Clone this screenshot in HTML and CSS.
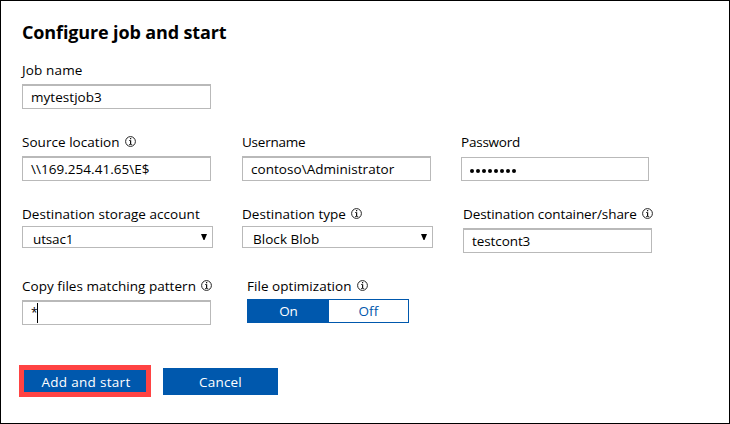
FILE: index.html
```
<!DOCTYPE html>
<html lang="en">
<head>
<meta charset="utf-8">
<title>Configure job and start</title>
<link rel="stylesheet" href="styles.css">
</head>
<body>
<svg class="defs" aria-hidden="true">
  <symbol id="info" viewBox="0 0 11 11"><circle cx="5.5" cy="5.5" r="4.9" fill="none" stroke="#222" stroke-width="1"/><path d="M5 2h1.200v1.200H5zM4 4.200h2.200v3.800h1v.8H4V8h1V5H4z" fill="#111"/></symbol>
</svg>
<main class="panel">
  <h1><span class="t-title">Configure job and start</span></h1>
  <div class="row row-name">
    <div class="field"><div class="label"><span class="t-job">Job name</span></div><div class="input thick"><span class="t-myjob">mytestjob3</span></div></div>
  </div>
  <div class="row row-source">
    <div class="field"><div class="label"><span class="t-source">Source location</span><svg class="info"><use href="#info"/></svg></div><div class="input thick"><span class="t-path">\\169.254.41.65\E$</span></div></div>
    <div class="field"><div class="label"><span class="t-user">Username</span></div><div class="input thick"><span class="t-admin">contoso\Administrator</span></div></div>
    <div class="field"><div class="label"><span class="t-pass">Password</span></div><div class="input password"><i></i><i></i><i></i><i></i><i></i><i></i><i></i><i></i></div></div>
  </div>
  <div class="row row-dest">
    <div class="field"><div class="label"><span class="t-storage">Destination storage account</span></div><div class="select"><span class="t-utsac">utsac1</span><svg class="arrow" viewBox="0 0 6 6"><path d="M0 0h6L3.500 6h-1z"/></svg></div></div>
    <div class="field"><div class="label"><span class="t-type">Destination type</span><svg class="info"><use href="#info"/></svg></div><div class="select"><span class="t-blob">Block Blob</span><svg class="arrow" viewBox="0 0 6 6"><path d="M0 0h6L3.500 6h-1z"/></svg></div></div>
    <div class="field"><div class="label"><span class="t-share">Destination container/share</span><svg class="info"><use href="#info"/></svg></div><div class="input thick lower"><span class="t-cont">testcont3</span></div></div>
  </div>
  <div class="row row-options">
    <div class="field"><div class="label"><span class="t-copy">Copy files matching pattern</span><svg class="info"><use href="#info"/></svg></div><div class="input thick pattern"><span class="t-star">*</span><b class="caret"></b></div></div>
    <div class="field"><div class="label"><span class="t-opt">File optimization</span><svg class="info"><use href="#info"/></svg></div><div class="toggle"><div class="on"><span class="t-on">On</span></div><div class="off"><span class="t-off">Off</span></div></div></div>
  </div>
  <div class="actions">
    <div class="button primary"><span class="t-add">Add and start</span></div>
    <div class="button"><span class="t-cancel">Cancel</span></div>
  </div>
</main>
</body>
</html>
```
FILE: styles.css
```
* { box-sizing: border-box; }
body { margin: 0; background: #fff; color: #000; font: 13.5px/18px "Open Sans", "Noto Sans", sans-serif; letter-spacing: 0.04px; }
.defs { display: block; width: 0; height: 0; }
.panel { width: 730px; height: 424px; border: 1px solid #000; padding: 19px 0 0 21px; }
h1 { margin: 0; height: 41px; font-size: 18px; line-height: 24px; font-weight: 700; letter-spacing: -0.13px; }
span { white-space: nowrap; }
.t-job { letter-spacing: 0.15px; }
.t-user, .t-pass { letter-spacing: -0.22px; }
.t-utsac { letter-spacing: -0.15px; }
.t-share, .t-cont { letter-spacing: -0.09px; }
.t-on { letter-spacing: -0.2px; }
.t-off, .t-cancel { letter-spacing: 0.2px; }
.t-add { letter-spacing: 0.3px; }
.t-star { width: 6px; font-size: 12px; }
.row { display: grid; grid-template-columns: 220px 219px 200px; height: 72px; }
.row-dest { grid-template-columns: 220px 221px 200px; }
.row-options { grid-template-columns: 225px 220px; height: 70px; }
.label { display: flex; align-items: center; height: 18px; margin-bottom: 5px; }
.info { width: 11px; height: 11px; margin: -1px 0 0 5px; }
.input { display: flex; align-items: center; width: 189px; height: 25px; border: 1px solid #b9b9b9; padding: 0 0 1px 8px; }
.thick { border-top-width: 2px; }
.password { width: 188px; height: 24px; margin-top: 6px; padding: 3px 0 0 8px; gap: 2px; }
.password i { width: 4px; height: 4px; border-radius: 50%; background: #000; }
.select { display: flex; align-items: center; justify-content: space-between; width: 191px; height: 22px; margin-top: -1px; border: 1px solid #b9b9b9; padding: 4px 5px 0 10px; }
.label:has(+ .select) { margin-bottom: 4px; }
.arrow { width: 6px; height: 6px; margin-top: -4px; }
.lower { margin-top: 5px; }
.pattern { padding-bottom: 0; }
.caret { width: 1px; height: 20px; background: #000; }
.toggle { display: flex; width: 162px; height: 24px; margin-top: -1px; border: 1px solid #0058ad; }
.toggle div { flex: 1; display: flex; align-items: center; justify-content: center; }
.label:has(+ .toggle) { margin-bottom: 5px; }
.toggle .on { flex: 0 0 81px; background: #0058ad; color: #fff; }
.off { color: #0058ad; }
.actions { display: flex; align-items: center; gap: 12px; height: 32px; margin: 18px 0 0 -3px; }
.button { display: flex; align-items: center; justify-content: center; width: 115px; height: 27px; padding-top: 1px; background: #0058ad; color: #fff; }
.primary { width: 132px; height: 32px; padding-left: 2px; border: 5px solid #ff4343; }
```
